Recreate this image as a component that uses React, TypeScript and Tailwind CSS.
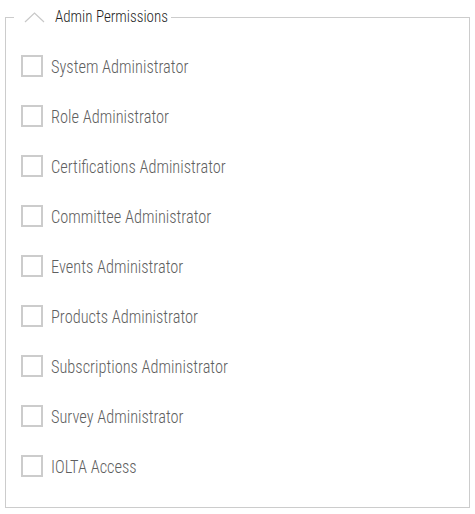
const items = [
  'System Administrator',
  'Role Administrator',
  'Certifications Administrator',
  'Committee Administrator',
  'Events Administrator',
  'Products Administrator',
  'Subscriptions Administrator',
  'Survey Administrator',
  'IOLTA Access',
];

const App = () => {
  return (
    <div className="bg-white w-[475px] h-[514px] pt-[5px] px-[5px] font-['Roboto_Condensed',sans-serif] font-light">
      <fieldset className="w-[465px] border border-[#cccccc]">
        <legend className="ml-[8px] px-[3px] h-[24px] flex items-center">
          <svg width="30" height="24" viewBox="0 0 30 24" className="mr-[8px]">
            <path d="M8 17 L17.5 8 L27 17" fill="none" stroke="#c8c8c8" strokeWidth="1.2" />
          </svg>
          <span className="inline-block text-[16px] text-[#1f1f1f] scale-x-[0.94] origin-left -mr-[7px]">
            Admin Permissions
          </span>
        </legend>
        <div className="flex flex-col pl-[15px] pt-[12px] pb-[16px]">
          {items.map((label) => (
            <label key={label} className="h-[50px] flex items-center gap-[8px] cursor-pointer">
              <span className="w-[22px] h-[22px] border-2 border-[#cccccc] bg-white" />
              <span className="inline-block text-[18px] text-[#5f5f5f] scale-x-[0.91] origin-left">{label}</span>
            </label>
          ))}
        </div>
      </fieldset>
    </div>
  );
};

export default App;
